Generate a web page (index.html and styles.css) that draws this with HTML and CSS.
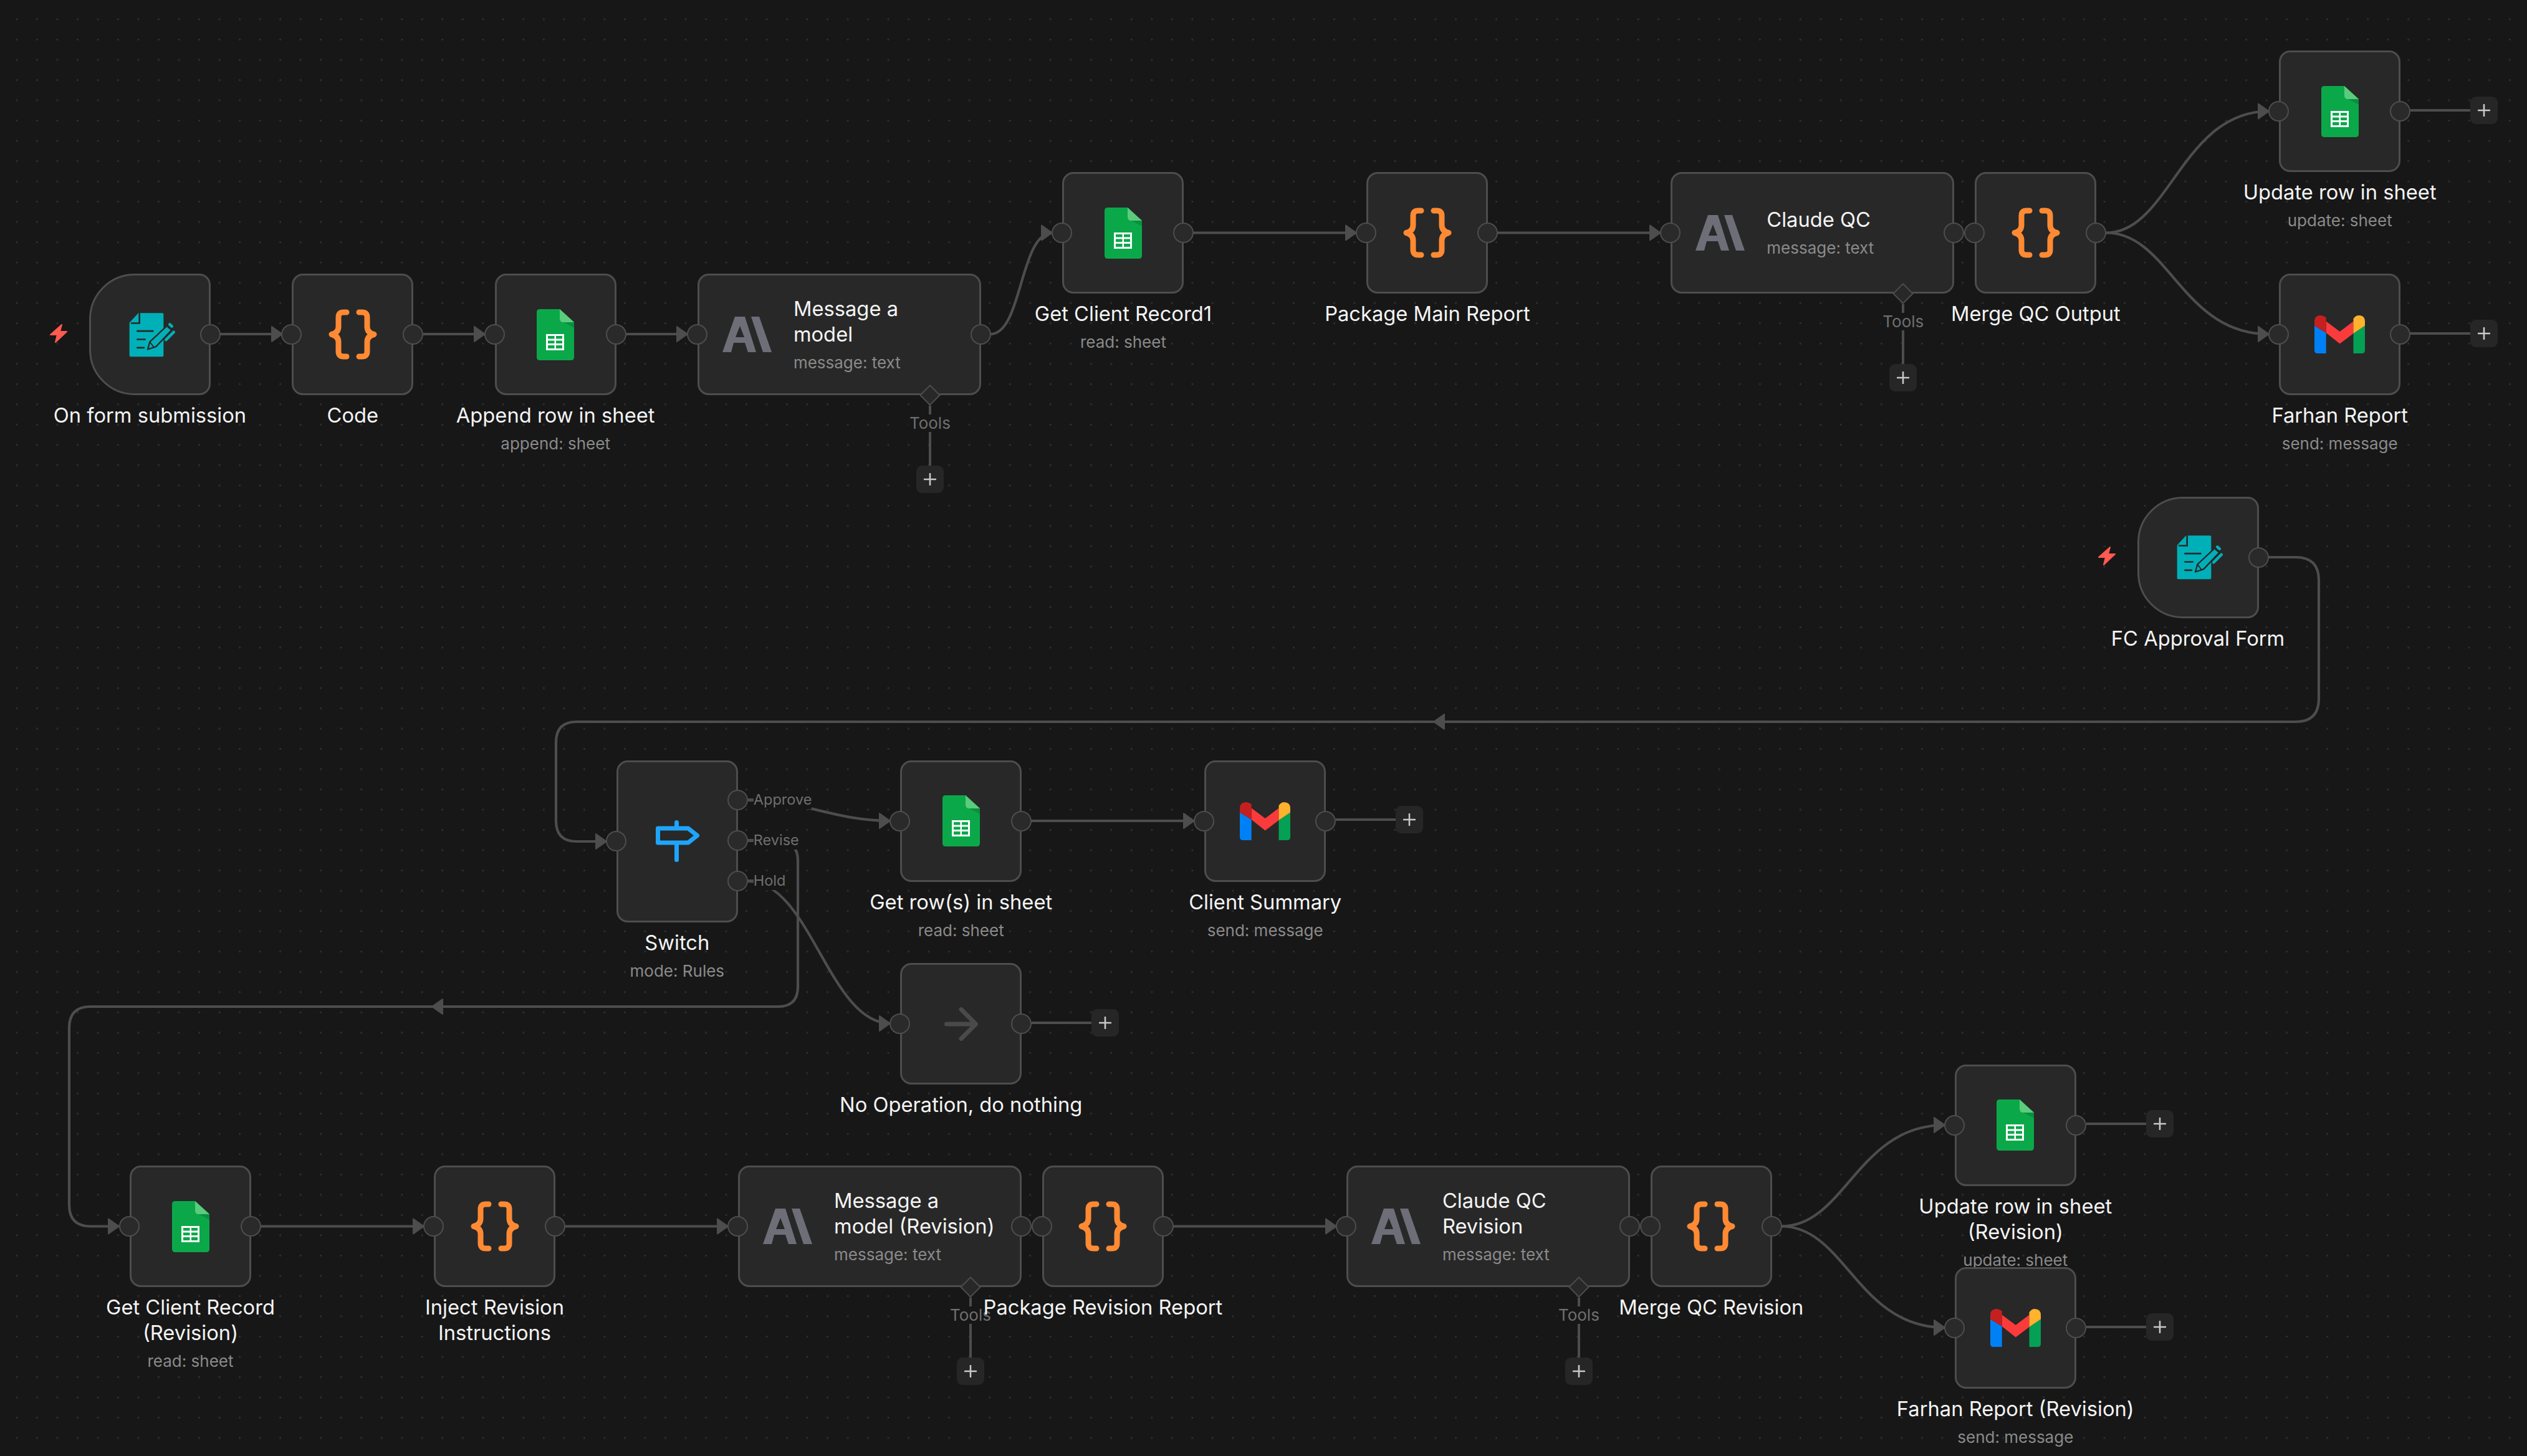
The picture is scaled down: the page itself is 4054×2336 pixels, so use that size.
FILE: index.html
```html
<!DOCTYPE html>
<html lang="en">
<head>
<meta charset="utf-8">
<title>Workflow canvas</title>
<link rel="stylesheet" href="styles.css">
</head>
<body>
<main class="canvas">
<svg class="edges" viewBox="0 0 4054 2336" aria-hidden="true">
  <defs>
    <marker id="arrow" markerUnits="userSpaceOnUse" markerWidth="22" markerHeight="30" refX="19" refY="15" orient="auto">
      <path class="arrow-head" d="M2 3 L19 15 L2 27Z"/>
    </marker>
    <symbol id="i-form" viewBox="0 0 225 215">
      <path class="teal" d="M2 50 L45 3 H160 Q166 3 166 9 V207 Q166 213 160 213 H8 Q2 213 2 207Z"/>
      <path class="dark" d="M50 6 V52 H12"/>
      <path class="dark" d="M40 90 H115 M40 130 H77 M40 170 H72"/>
      <path class="pen" d="M90 178 L100 142 L182 65 L205 85 L130 165Z"/>
      <path class="dark thin" d="M100 142 L118 166"/>
      <path class="teal-line" d="M196 58 L206 67"/>
      <path class="teal-line" d="M178 132 L215 95"/>
    </symbol>
    <symbol id="i-code" viewBox="0 0 78 81">
      <path class="brace" d="M29 5 H24 Q16 5 16 13 V28 Q16 38 5 40.5 Q16 43 16 53 V68 Q16 76 24 76 H29"/>
      <path class="brace" d="M49 5 H54 Q62 5 62 13 V28 Q62 38 73 40.5 Q62 43 62 53 V68 Q62 76 54 76 H49"/>
    </symbol>
    <symbol id="i-sheet" viewBox="0 0 60 82">
      <path fill="#0ba84a" d="M5 0 H37 L60 21 V77 Q60 82 55 82 H5 Q0 82 0 77 V5 Q0 0 5 0Z"/>
      <path fill="#0a8f40" d="M43 21 H60 V30Z"/>
      <path fill="#5bcb7c" d="M37 0 L60 21 H43 Q37 21 37 15Z"/>
      <path fill="#ffffff" d="M15 40 H44 V66 H15Z"/>
      <path fill="#0ba84a" d="M18 43 H28.5 V47.5 H18Z M31 43 H41 V47.5 H31Z M18 50.5 H28.5 V55 H18Z M31 50.5 H41 V55 H31Z M18 58 H28.5 V63 H18Z M31 58 H41 V63 H31Z"/>
    </symbol>
    <symbol id="i-gmail" viewBox="0 0 81 61">
      <path fill="#0080f5" d="M0 16.5 L18.7 28 V61 H5 Q0 61 0 56Z"/>
      <path fill="#04a054" d="M62.5 29 L81 16.5 V56 Q81 61 76 61 H62.5Z"/>
      <path fill="#fb3b3b" d="M18.7 9.5 L40.7 26 L62.5 9.5 V29 L40.7 45.5 L18.7 28Z"/>
      <path fill="#c5201f" d="M0 10 Q0 0 10 0 Q14 0 18.7 3.5 V28 L0 16.5Z"/>
      <path fill="#ffb22e" d="M62.5 5.5 Q66 0 71 0 Q81 0 81 10 V16.5 L62.5 29Z"/>
    </symbol>
    <symbol id="i-ai" viewBox="0 0 79 57">
      <path class="ai" fill-rule="evenodd" d="M0 57 L20 0 H36 L54 57 H41 L36 42 H18 L14 57Z M28 15 L21 33 H35Z"/>
      <path class="ai" d="M46 0 H59 L79 57 H65Z"/>
    </symbol>
    <symbol id="i-plus" viewBox="0 0 20 20">
      <path class="plus-glyph" d="M10 1 V19 M1 10 H19"/>
    </symbol>
  </defs>

  <g class="wires">
    <path d="M353 536 H453" marker-end="url(#arrow)"/>
    <path d="M679 536 H778" marker-end="url(#arrow)"/>
    <path d="M1004 536 H1103" marker-end="url(#arrow)"/>
    <path d="M1589 536 C1640 536 1636 373.5 1688 373.5" marker-end="url(#arrow)"/>
    <path d="M1914 373.5 H2176" marker-end="url(#arrow)"/>
    <path d="M2402 373.5 H2664" marker-end="url(#arrow)"/>
    <path d="M3379 373.5 C3480 373.5 3500 178.5 3640 178.5" marker-end="url(#arrow)"/>
    <path d="M3379 373.5 C3480 373.5 3500 536 3640 536" marker-end="url(#arrow)"/>
    <path d="M3639 894 H3683 Q3720 894 3720 931 V1121 Q3720 1158 3683 1158 H925 Q892 1158 892 1191 V1317 Q892 1350 925 1350 H973" marker-end="url(#arrow)"/>
    <path d="M1200 1284 C1290 1284 1340 1317 1428 1317" marker-end="url(#arrow)"/>
    <path d="M1200 1349 H1248 Q1280 1349 1280 1381 V1583 Q1280 1615 1248 1615 H145 Q111 1615 111 1649 V1933 Q111 1967.5 145 1967.5 H191" marker-end="url(#arrow)"/>
    <path d="M1200 1414 C1300 1414 1330 1642 1428 1642" marker-end="url(#arrow)"/>
    <path d="M1654 1317 H1916" marker-end="url(#arrow)"/>
    <path d="M418 1967.5 H680" marker-end="url(#arrow)"/>
    <path d="M906 1967.5 H1168" marker-end="url(#arrow)"/>
    <path d="M1882 1967.5 H2144" marker-end="url(#arrow)"/>
    <path d="M2858 1967.5 C2960 1967.5 2980 1805 3120 1805" marker-end="url(#arrow)"/>
    <path d="M2858 1967.5 C2960 1967.5 2980 2130 3120 2130" marker-end="url(#arrow)"/>
  </g>
  <path class="arrow-head" d="M2317 1146 L2300 1158 L2317 1170Z"/>
  <path class="arrow-head" d="M710 1603 L693 1615 L710 1627Z"/>
</svg>

<!-- Main flow -->
<section class="node n-form">
  <div class="box trigger">
    <svg class="bolt" viewBox="0 0 28 30"><path d="M19 1 L1 17 H12 L9 29 L27 12 H16Z"/></svg>
    <svg class="icon i-form"><use href="#i-form"/></svg>
    <span class="handle out"></span>
  </div>
  <div class="label"><div class="title">On form submission</div></div>
</section>

<section class="node n-code1">
  <div class="box">
    <span class="handle in"></span>
    <svg class="icon i-code"><use href="#i-code"/></svg>
    <span class="handle out"></span>
  </div>
  <div class="label"><div class="title">Code</div></div>
</section>

<section class="node n-append">
  <div class="box">
    <span class="handle in"></span>
    <svg class="icon i-sheet"><use href="#i-sheet"/></svg>
    <span class="handle out"></span>
  </div>
  <div class="label"><div class="title">Append row in sheet</div><div class="sub">append: sheet</div></div>
</section>

<section class="node wide n-msg1">
  <div class="box">
    <span class="handle in"></span>
    <svg class="icon i-ai"><use href="#i-ai"/></svg>
    <div class="inner"><div class="title">Message a<br>model</div><div class="sub">message: text</div></div>
    <span class="handle out"></span>
    <div class="tools"><span class="diamond"></span><span class="tools-line"></span><span class="tools-label">Tools</span><span class="plus-box"><svg class="plus-icon"><use href="#i-plus"/></svg></span></div>
  </div>
</section>

<section class="node n-get1">
  <div class="box">
    <span class="handle in"></span>
    <svg class="icon i-sheet"><use href="#i-sheet"/></svg>
    <span class="handle out"></span>
  </div>
  <div class="label"><div class="title">Get Client Record1</div><div class="sub">read: sheet</div></div>
</section>

<section class="node n-pack1">
  <div class="box">
    <span class="handle in"></span>
    <svg class="icon i-code"><use href="#i-code"/></svg>
    <span class="handle out"></span>
  </div>
  <div class="label"><div class="title">Package Main Report</div></div>
</section>

<section class="node wide n-qc1">
  <div class="box">
    <span class="handle in"></span>
    <svg class="icon i-ai"><use href="#i-ai"/></svg>
    <div class="inner"><div class="title">Claude QC</div><div class="sub">message: text</div></div>
    <span class="handle out"></span>
    <div class="tools"><span class="diamond"></span><span class="tools-line"></span><span class="tools-label">Tools</span><span class="plus-box"><svg class="plus-icon"><use href="#i-plus"/></svg></span></div>
  </div>
</section>

<section class="node n-merge1">
  <div class="box">
    <span class="handle in"></span>
    <svg class="icon i-code"><use href="#i-code"/></svg>
    <span class="handle out"></span>
  </div>
  <div class="label"><div class="title">Merge QC Output</div></div>
</section>

<section class="node n-upd1">
  <div class="box">
    <span class="handle in"></span>
    <svg class="icon i-sheet"><use href="#i-sheet"/></svg>
    <span class="handle out"></span>
    <span class="add"><svg class="plus-icon"><use href="#i-plus"/></svg></span>
  </div>
  <div class="label"><div class="title">Update row in sheet</div><div class="sub">update: sheet</div></div>
</section>

<section class="node n-far1">
  <div class="box">
    <span class="handle in"></span>
    <svg class="icon i-gmail"><use href="#i-gmail"/></svg>
    <span class="handle out"></span>
    <span class="add"><svg class="plus-icon"><use href="#i-plus"/></svg></span>
  </div>
  <div class="label"><div class="title">Farhan Report</div><div class="sub">send: message</div></div>
</section>

<!-- Approval flow -->
<section class="node n-form2">
  <div class="box trigger">
    <svg class="bolt" viewBox="0 0 28 30"><path d="M19 1 L1 17 H12 L9 29 L27 12 H16Z"/></svg>
    <svg class="icon i-form"><use href="#i-form"/></svg>
    <span class="handle out"></span>
  </div>
  <div class="label"><div class="title">FC Approval Form</div></div>
</section>

<section class="node n-switch">
  <div class="box tall">
    <span class="handle in"></span>
    <svg class="icon i-switch" viewBox="0 0 71 67">
      <path class="sign" d="M3.5 13 H52 L66.5 24.5 L52 36 H3.5Z"/>
      <path class="sign" d="M33.5 3.5 V10 M33.5 38 V63.5"/>
    </svg>
    <div class="port p1"><span class="handle-port"></span><span class="port-stub"></span><span class="port-label">Approve</span></div>
    <div class="port p2"><span class="handle-port"></span><span class="port-stub"></span><span class="port-label">Revise</span></div>
    <div class="port p3"><span class="handle-port"></span><span class="port-stub"></span><span class="port-label">Hold</span></div>
  </div>
  <div class="label"><div class="title">Switch</div><div class="sub">mode: Rules</div></div>
</section>

<section class="node n-rows">
  <div class="box">
    <span class="handle in"></span>
    <svg class="icon i-sheet"><use href="#i-sheet"/></svg>
    <span class="handle out"></span>
  </div>
  <div class="label"><div class="title">Get row(s) in sheet</div><div class="sub">read: sheet</div></div>
</section>

<section class="node n-summary">
  <div class="box">
    <span class="handle in"></span>
    <svg class="icon i-gmail"><use href="#i-gmail"/></svg>
    <span class="handle out"></span>
    <span class="add"><svg class="plus-icon"><use href="#i-plus"/></svg></span>
  </div>
  <div class="label"><div class="title">Client Summary</div><div class="sub">send: message</div></div>
</section>

<section class="node n-noop">
  <div class="box">
    <span class="handle in"></span>
    <svg class="icon i-arrow" viewBox="0 0 54 54"><path d="M3.5 27 H50 M27 3.5 L50.5 27 L27 50.5"/></svg>
    <span class="handle out"></span>
    <span class="add"><svg class="plus-icon"><use href="#i-plus"/></svg></span>
  </div>
  <div class="label"><div class="title">No Operation, do nothing</div></div>
</section>

<!-- Revision flow -->
<section class="node n-get2">
  <div class="box">
    <span class="handle in"></span>
    <svg class="icon i-sheet"><use href="#i-sheet"/></svg>
    <span class="handle out"></span>
  </div>
  <div class="label"><div class="title">Get Client Record<br>(Revision)</div><div class="sub">read: sheet</div></div>
</section>

<section class="node n-inject">
  <div class="box">
    <span class="handle in"></span>
    <svg class="icon i-code"><use href="#i-code"/></svg>
    <span class="handle out"></span>
  </div>
  <div class="label"><div class="title">Inject Revision<br>Instructions</div></div>
</section>

<section class="node wide n-msg2">
  <div class="box">
    <span class="handle in"></span>
    <svg class="icon i-ai"><use href="#i-ai"/></svg>
    <div class="inner"><div class="title">Message a<br>model (Revision)</div><div class="sub">message: text</div></div>
    <span class="handle out"></span>
    <div class="tools"><span class="diamond"></span><span class="tools-line"></span><span class="tools-label">Tools</span><span class="plus-box"><svg class="plus-icon"><use href="#i-plus"/></svg></span></div>
  </div>
</section>

<section class="node n-pack2">
  <div class="box">
    <span class="handle in"></span>
    <svg class="icon i-code"><use href="#i-code"/></svg>
    <span class="handle out"></span>
  </div>
  <div class="label"><div class="title">Package Revision Report</div></div>
</section>

<section class="node wide n-qc2">
  <div class="box">
    <span class="handle in"></span>
    <svg class="icon i-ai"><use href="#i-ai"/></svg>
    <div class="inner"><div class="title">Claude QC<br>Revision</div><div class="sub">message: text</div></div>
    <span class="handle out"></span>
    <div class="tools"><span class="diamond"></span><span class="tools-line"></span><span class="tools-label">Tools</span><span class="plus-box"><svg class="plus-icon"><use href="#i-plus"/></svg></span></div>
  </div>
</section>

<section class="node n-merge2">
  <div class="box">
    <span class="handle in"></span>
    <svg class="icon i-code"><use href="#i-code"/></svg>
    <span class="handle out"></span>
  </div>
  <div class="label"><div class="title">Merge QC Revision</div></div>
</section>

<section class="node n-upd2">
  <div class="box">
    <span class="handle in"></span>
    <svg class="icon i-sheet"><use href="#i-sheet"/></svg>
    <span class="handle out"></span>
    <span class="add"><svg class="plus-icon"><use href="#i-plus"/></svg></span>
  </div>
  <div class="label"><div class="title">Update row in sheet<br>(Revision)</div><div class="sub">update: sheet</div></div>
</section>

<section class="node n-far2">
  <div class="box">
    <span class="handle in"></span>
    <svg class="icon i-gmail"><use href="#i-gmail"/></svg>
    <span class="handle out"></span>
    <span class="add"><svg class="plus-icon"><use href="#i-plus"/></svg></span>
  </div>
  <div class="label"><div class="title">Farhan Report (Revision)</div><div class="sub">send: message</div></div>
</section>
</main>
</body>
</html>
```
FILE: styles.css
```css
:root {
  --u: 32.53px;
  --bg: #171717;
  --fill: #282828;
  --line: #4d4d4d;
}

* { box-sizing: border-box; }

html, body {
  margin: 0;
  width: 4054px;
  height: 2336px;
  overflow: hidden;
  background: var(--bg);
}

.canvas {
  position: relative;
  width: 4054px;
  height: 2336px;
  font-family: "Inter", "Liberation Sans", sans-serif;
  background-color: var(--bg);
  background-image: radial-gradient(circle at center, #2f2f2f 0, #2f2f2f 1.2px, transparent 1.9px);
  background-size: var(--u) var(--u);
  background-position: 10.7px 14.7px;
}

.edges {
  position: absolute;
  inset: 0;
  width: 4054px;
  height: 2336px;
}

.wires path {
  fill: none;
  stroke: #4d4d4d;
  stroke-width: 4.2;
}

.arrow-head {
  fill: #4d4d4d;
  stroke: #4d4d4d;
  stroke-width: 2;
  stroke-linejoin: round;
}

/* symbol artwork */
.teal { fill: #00b0b9; }
.teal-line { fill: none; stroke: #00b0b9; stroke-width: 14; stroke-linecap: round; }
.dark { fill: none; stroke: #282828; stroke-width: 8; stroke-linecap: round; }
.dark.thin { stroke-width: 6; }
.pen { fill: #00b0b9; stroke: #282828; stroke-width: 7; stroke-linejoin: round; }
.brace { fill: none; stroke: #ff8a33; stroke-width: 9; stroke-linecap: round; stroke-linejoin: round; }
.ai { fill: #6e6e78; }
.plus-glyph { fill: none; stroke: #c8c8c8; stroke-width: 2.6; stroke-linecap: round; }

/* node shell */
.node {
  position: absolute;
  width: 195px;
  display: flex;
  flex-direction: column;
  align-items: center;
}
.node.wide { width: 455px; }

.box {
  position: relative;
  flex: none;
  width: 100%;
  height: 195px;
  display: flex;
  align-items: center;
  justify-content: center;
  background: var(--fill);
  border: 3px solid var(--line);
  border-radius: 18px;
}
.box.tall { height: 260px; }
.box.trigger { border-radius: 73px 18px 18px 73px; }
.wide .box { justify-content: flex-start; padding-left: 37px; }

.handle, .handle-port {
  position: absolute;
  width: 33px;
  height: 33px;
  border-radius: 50%;
  background: #2a2a2a;
  border: 2.5px solid var(--line);
}
.handle { top: calc(50% - 16.5px); }
.handle.in { left: -20px; }
.handle.out { right: -19px; }

/* add-next button */
.add, .plus-box {
  position: absolute;
  width: 44px;
  height: 44px;
  display: flex;
  align-items: center;
  justify-content: center;
  background: #262626;
  border-radius: 9px;
}
.add { left: calc(100% + 115px); top: calc(50% - 24px); }
.add::before {
  content: "";
  position: absolute;
  right: 100%;
  top: 20px;
  width: 96px;
  height: 4px;
  background: var(--line);
}
.plus-icon { width: 20px; height: 20px; display: block; }

/* ai sub-node tools */
.tools {
  position: absolute;
  left: 370px;
  top: calc(100% + 3px);
  width: 0;
  height: 0;
}
.diamond {
  position: absolute;
  left: -12px;
  top: -12px;
  width: 24px;
  height: 24px;
  transform: rotate(45deg);
  background: var(--fill);
  border: 2.5px solid var(--line);
}
.tools-line {
  position: absolute;
  left: -2px;
  top: 17px;
  width: 4px;
  height: 97px;
  background: var(--line);
}
.tools-label {
  position: absolute;
  top: 31px;
  left: -35px;
  width: 70px;
  text-align: center;
  line-height: 28px;
  font-size: 26px;
  color: #6f6f6f;
  background: var(--bg);
}
.plus-box { left: -22px; top: 113px; }

/* icons */
.icon { display: block; flex: none; }
.i-form { width: 75px; height: 72px; margin-left: 7px; }
.i-code { width: 78px; height: 81px; }
.i-sheet { width: 60px; height: 82px; }
.i-gmail { width: 81px; height: 61px; }
.i-ai { width: 79px; height: 57px; margin-right: 35px; }
.i-switch { width: 71px; height: 67px; margin-left: 3px; }
.sign { fill: none; stroke: #1ea5fb; stroke-width: 7; stroke-linecap: round; stroke-linejoin: round; }
.i-arrow { width: 54px; height: 54px; }
.i-arrow path { fill: none; stroke: #4a4a4a; stroke-width: 7; stroke-linecap: round; stroke-linejoin: round; }

.bolt {
  position: absolute;
  left: -66px;
  top: calc(50% - 17px);
  width: 28px;
  height: 30px;
}
.bolt path { fill: #ff5a50; stroke: #ff5a50; stroke-width: 2; stroke-linejoin: round; }

/* text */
.label {
  margin-top: 12px;
  text-align: center;
  white-space: nowrap;
}
.inner { white-space: nowrap; }
.title {
  font-size: 32.7px;
  font-weight: 400;
  line-height: 41px;
  color: #f4f4f4;
}
.sub {
  margin-top: 8px;
  font-size: 26px;
  line-height: 34px;
  color: #8a8a8a;
}

/* switch ports */
.port {
  position: absolute;
  left: calc(100% - 14px);
  height: 33px;
  display: flex;
  align-items: center;
}
.port.p1 { top: 44px; }
.port.p2 { top: 109px; }
.port.p3 { top: 174px; }
.handle-port { position: relative; flex: none; }
.port-stub { flex: none; width: 9px; height: 4px; background: var(--line); }
.port-label {
  font-size: 23.5px;
  line-height: 30px;
  color: #6f6f6f;
  background: var(--bg);
}

/* free-canvas placement (grid of 32.53px) */
.n-form    { left: 143px;    top: 439px; }
.n-code1   { left: 468.3px;  top: 439px; }
.n-append  { left: 793.6px;  top: 439px; }
.n-msg1    { left: 1118.9px; top: 439px; }
.n-get1    { left: 1704.4px; top: 276.4px; }
.n-pack1   { left: 2192.4px; top: 276.4px; }
.n-qc1     { left: 2680.3px; top: 276.4px; }
.n-merge1  { left: 3168.3px; top: 276.4px; }
.n-upd1    { left: 3656.2px; top: 81.2px; }
.n-far1    { left: 3656.2px; top: 439px; }
.n-form2   { left: 3428.5px; top: 796.8px; }
.n-switch  { left: 988.8px;  top: 1219.7px; }
.n-rows    { left: 1444.2px; top: 1219.7px; }
.n-summary { left: 1932.2px; top: 1219.7px; }
.n-noop    { left: 1444.2px; top: 1545px; }
.n-get2    { left: 208px;    top: 1870.3px; }
.n-inject  { left: 696px;    top: 1870.3px; }
.n-msg2    { left: 1184px;   top: 1870.3px; }
.n-pack2   { left: 1671.9px; top: 1870.3px; }
.n-qc2     { left: 2159.9px; top: 1870.3px; }
.n-merge2  { left: 2647.8px; top: 1870.3px; }
.n-upd2    { left: 3135.8px; top: 1707.7px; }
.n-far2    { left: 3135.8px; top: 2033px; }
```
